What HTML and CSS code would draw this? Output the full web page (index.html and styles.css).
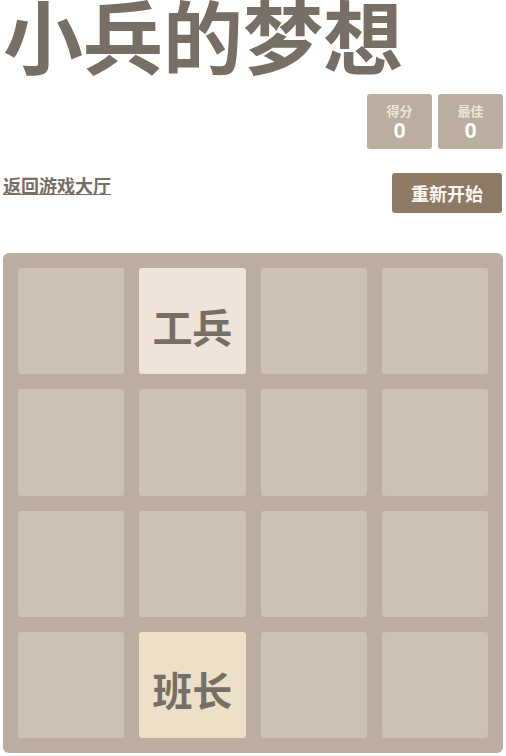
FILE: index.html
```html
<!DOCTYPE html>
<html lang="zh">
<head>
<meta charset="utf-8">
<title>小兵的梦想</title>
<link rel="stylesheet" href="styles.css">
</head>
<body>
<div class="container">
  <header class="heading">
    <h1 class="title">小兵的梦想</h1>
    <div class="scores">
      <div class="score-box"><span class="score-label">得分</span><span class="score-value">0</span></div>
      <div class="score-box"><span class="score-label">最佳</span><span class="score-value">0</span></div>
    </div>
  </header>
  <div class="above-game">
    <a class="back-link" href="#">返回游戏大厅</a>
    <a class="restart-button" href="#">重新开始</a>
  </div>
  <div class="game-container">
    <div class="grid">
      <div class="cell"></div>
      <div class="cell tile tile-2">工兵</div>
      <div class="cell"></div>
      <div class="cell"></div>
      <div class="cell"></div>
      <div class="cell"></div>
      <div class="cell"></div>
      <div class="cell"></div>
      <div class="cell"></div>
      <div class="cell"></div>
      <div class="cell"></div>
      <div class="cell"></div>
      <div class="cell"></div>
      <div class="cell tile tile-4">班长</div>
      <div class="cell"></div>
      <div class="cell"></div>
    </div>
  </div>
</div>
</body>
</html>
```

FILE: styles.css
```css
html, body {
  margin: 0;
  padding: 0;
  background: #ffffff;
}

body {
  font-family: "Noto Sans CJK SC", "Noto Sans", sans-serif;
  color: #776e65;
  font-size: 18px;
}

.container {
  width: 500px;
  margin: 0 auto;
}

.heading {
  display: flex;
  flex-direction: column;
}

.title {
  margin: -7px 0 0 0;
  font-size: 80px;
  line-height: 80px;
  font-weight: 700;
  color: #776e65;
  white-space: nowrap;
}

.scores {
  display: flex;
  justify-content: flex-end;
  gap: 6px;
  margin-top: 21px;
}

.score-box {
  width: 65px;
  height: 55px;
  background: #bbada0;
  border-radius: 3px;
  display: flex;
  flex-direction: column;
  align-items: center;
  color: #ffffff;
  box-sizing: border-box;
  padding-top: 9px;
}

.score-label {
  font-size: 13px;
  line-height: 16px;
  font-weight: 700;
  color: #eee4da;
}

.score-value {
  margin-top: 1px;
  font-size: 22px;
  line-height: 22px;
  font-weight: 700;
  font-family: "Liberation Sans", "Noto Sans CJK SC", sans-serif;
  color: #ffffff;
}

.above-game {
  display: flex;
  justify-content: space-between;
  align-items: flex-start;
  margin-top: 24px;
}

.back-link {
  color: #776e65;
  font-size: 18px;
  line-height: 24px;
  font-weight: 700;
  text-decoration: underline;
}

.restart-button {
  display: block;
  width: 110px;
  height: 40px;
  line-height: 40px;
  text-align: center;
  background: #8f7a66;
  color: #f9f6f2;
  border-radius: 3px;
  font-size: 18px;
  font-weight: 700;
  text-decoration: none;
  margin-right: 1px;
}

.game-container {
  margin-top: 40px;
  width: 500px;
  height: 500px;
  background: #bbada0;
  border-radius: 6px;
  padding: 15px;
  box-sizing: border-box;
}

.grid {
  display: grid;
  grid-template-columns: repeat(4, 1fr);
  grid-template-rows: repeat(4, 1fr);
  gap: 15px;
  width: 100%;
  height: 100%;
}

.cell {
  background: #cdc1b4;
  border-radius: 3px;
}

.tile {
  display: flex;
  align-items: center;
  justify-content: center;
  box-sizing: border-box;
  padding-top: 9px;
  font-size: 40px;
  font-weight: 700;
  color: #776e65;
}

.tile-2 {
  background: #eee4da;
}

.tile-4 {
  background: #ede0c8;
}
```
